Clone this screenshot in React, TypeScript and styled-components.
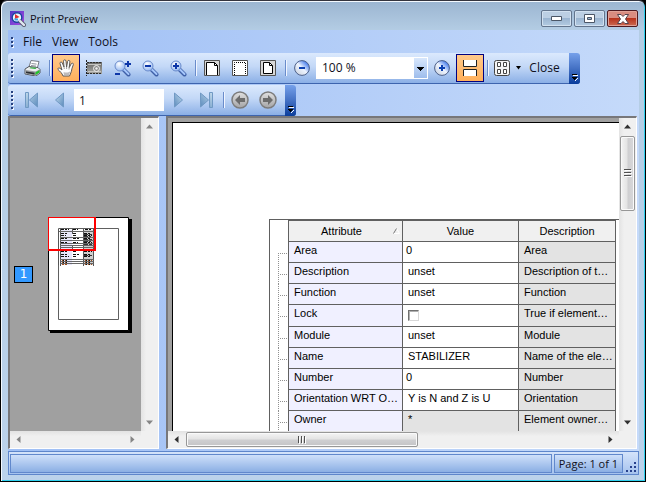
import React from 'react';
import styled, { createGlobalStyle, css } from 'styled-components';

const UI_FONT = '"Open Sans", "Noto Sans", sans-serif';
const TABLE_FONT = '"Liberation Sans", Arial, sans-serif';

const GlobalStyle = createGlobalStyle`
  * { box-sizing: border-box; }
  html, body { margin: 0; background: #000; }
  button, input, select { font: inherit; color: inherit; margin: 0; }
`;

/* ---------- window ---------- */

const Frame = styled.div`
  display: flex;
  flex-direction: column;
  height: 100vh;
  padding: 0 6px 6px;
  overflow: hidden;
  border: 1px solid #000;
  border-top-color: #34343e;
  border-radius: 7px 7px 0 0;
  box-shadow: inset 1px 1px 0 #f4f9ff, inset -1px -1px 0 #2fd0ee;
  background: linear-gradient(#9bb5d1 0, #b4cde4 30px, #bbd2eb 100%);
  font: 12px/16px ${UI_FONT};
  color: #10101c;
`;

const TitleBar = styled.header`
  display: flex;
  align-items: center;
  flex: none;
  height: 29px;
  padding: 6px 1px 0 3px;
  gap: 4px;
`;

const Title = styled.h1`
  flex: 1;
  margin: 0;
  font-size: 11px;
  font-weight: 400;
`;

const WindowButtons = styled.div`
  display: flex;
  gap: 2px;
`;

const WindowButton = styled.button<{ $danger?: boolean }>`
  display: flex;
  align-items: center;
  justify-content: center;
  width: 31px;
  height: 17px;
  padding: 0;
  border: 1px solid ${(p) => (p.$danger ? '#4e1a20' : '#63758d')};
  border-radius: 2px;
  box-shadow: inset 0 0 0 1px ${(p) => (p.$danger ? '#e0a297' : '#d2e1f0')};
  background: ${(p) =>
    p.$danger
      ? 'linear-gradient(#d98c80 0 45%, #b8331c 50%, #cb6b52)'
      : 'linear-gradient(#bccfe3 0 45%, #9bb5d1 50%, #b3cbe2)'};
`;

const Client = styled.div`
  display: flex;
  flex-direction: column;
  flex: 1;
  min-height: 0;
  margin-left: 1px;
  background: linear-gradient(90deg, #9fbff5, #c5dafa);
`;

/* ---------- menu and toolbars ---------- */

const Grip = styled.span<{ $rows: number }>`
  flex: none;
  width: 4px;
  height: ${(p) => p.$rows * 4}px;
  margin: 0 3px;
  background:
    repeating-linear-gradient(transparent 0 1px, #27417f 1px 3px, transparent 3px 4px) 0 0 / 2px 100% no-repeat,
    repeating-linear-gradient(transparent 0 2px, #f4f8ff 2px 4px) 1px 0 / 2px 100% no-repeat;
`;

const MenuBar = styled.nav`
  display: flex;
  align-items: center;
  flex: none;
  height: 23px;
`;

const MenuItem = styled.button`
  padding: 0 5px;
  border: 0;
  background: none;
`;

const Toolbars = styled.div`
  display: flex;
  flex-direction: column;
  flex: none;
  gap: 1px;
`;

const Toolbar = styled.div`
  display: flex;
  align-items: center;
  align-self: flex-start;
  flex: none;
  height: 31px;
  border-radius: 3px;
  border-bottom: 1px solid #3d64ae;
  background: linear-gradient(#dbe9fd, #c3d8f7 45%, #8bafe6);
`;

const ToolButton = styled.button<{ $active?: boolean; $width?: number }>`
  display: flex;
  align-items: center;
  justify-content: center;
  flex: none;
  width: ${(p) => p.$width ?? 28}px;
  height: 28px;
  padding: 0;
  border: 1px solid transparent;
  background: none;
  ${(p) =>
    p.$active &&
    css`
      border-color: #000080;
      background: linear-gradient(#ffc98b, #ffb05c);
    `}
`;

const Separator = styled.span`
  flex: none;
  width: 2px;
  height: 16px;
  margin: 0 1px 0 3px;
  background: linear-gradient(90deg, #6a8ccb 1px, #f1f6ff 1px);
`;

const Overflow = styled.button`
  display: flex;
  align-items: flex-end;
  justify-content: center;
  width: 11px;
  height: 31px;
  margin-left: 3px;
  margin-bottom: -1px;
  padding: 0 0 3px;
  border: 0;
  border-radius: 0 3px 3px 0;
  background: linear-gradient(#75a0ea, #4471c4 50%, #0a3d9c);
`;

const ZoomBox = styled.div`
  display: flex;
  width: 112px;
  height: 22px;
  background: #fff;
`;

const ZoomSelect = styled.select`
  appearance: none;
  flex: 1;
  padding: 0 0 0 6px;
  border: 0;
  border-radius: 0;
  background:
    linear-gradient(#000, #000) right 4px top 10px / 7px 1px no-repeat,
    linear-gradient(#000, #000) right 5px top 11px / 5px 1px no-repeat,
    linear-gradient(#000, #000) right 6px top 12px / 3px 1px no-repeat,
    linear-gradient(#000, #000) right 7px top 13px / 1px 1px no-repeat,
    linear-gradient(#d8e7fc, #9ebdec) right 1px center / 13px 20px no-repeat,
    #fff;
`;

const PageInput = styled.input`
  width: 90px;
  height: 22px;
  padding: 0 5px;
  border: 0;
  background: #fff;
`;

/* ---------- panes ---------- */

const Panes = styled.main`
  display: flex;
  flex: 1;
  min-height: 0;
  gap: 7px;
  padding: 0 2px 2px 0;
`;

const Pane = styled.section<{ $side?: boolean }>`
  display: grid;
  flex: ${(p) => (p.$side ? '0 0 151px' : '1')};
  grid-template: minmax(0, 1fr) 17px / minmax(0, 1fr) 17px;
  min-width: 0;
  border: solid;
  border-width: 2px 1px 1px 2px;
  border-color: #77777a #fff #fff #77777a;
  background: #f0f0f0;
`;

const ThumbArea = styled.div`
  display: flex;
  align-items: center;
  gap: 15px;
  padding-left: 4px;
  overflow: hidden;
  background: #a0a0a0;
`;

const PageBadge = styled.span`
  flex: none;
  width: 19px;
  height: 17px;
  border: 1px solid #000;
  background: #3399ff;
  color: #fff;
  font: 12px/15px "DejaVu Sans", sans-serif;
  text-align: center;
`;

const PageArea = styled.div`
  display: flex;
  padding: 4px 0 0 4px;
  overflow: hidden;
  background: #a0a0a0;
`;

const Sheet = styled.div`
  flex: 1 0 auto;
  width: 100%;
  padding: 96px 0 0 96px;
  border: solid #000;
  border-width: 1px 0 0 1px;
  background: #fff;
`;

const Bar = styled.div<{ $vertical?: boolean }>`
  display: flex;
  flex-direction: ${(p) => (p.$vertical ? 'column' : 'row')};
  min-width: 0;
  min-height: 0;
  background: ${(p) =>
    p.$vertical
      ? 'linear-gradient(90deg, #e3e3e3, #f0f0f0 30%, #f0f0f0)'
      : 'linear-gradient(#e3e3e3, #f0f0f0 30%, #f0f0f0)'};
`;

const BarArrow = styled.button<{ $muted?: boolean }>`
  display: flex;
  align-items: center;
  justify-content: center;
  flex: none;
  width: 17px;
  height: 17px;
  padding: 0;
  border: 0;
  background: none;
  color: ${(p) => (p.$muted ? '#858585' : '#303030')};
`;

const BarTrack = styled.div<{ $vertical?: boolean }>`
  display: flex;
  flex: 1;
  flex-direction: ${(p) => (p.$vertical ? 'column' : 'row')};
  min-width: 0;
  min-height: 0;
  padding: 1px;
`;

const BarThumb = styled.button<{ $vertical?: boolean }>`
  display: flex;
  align-items: center;
  justify-content: center;
  padding: 0;
  border: 1px solid #979797;
  border-radius: 2px;
  box-shadow: inset 0 0 0 1px #fafafa;
  ${(p) =>
    p.$vertical
      ? css`
          height: 27%;
          background: linear-gradient(90deg, #f4f4f4, #e4e4e4 45%, #cfcfd1 55%, #d8d8da);
        `
      : css`
          width: 56%;
          background: linear-gradient(#f4f4f4, #e4e4e4 45%, #cfcfd1 55%, #c4c4c6);
        `}
`;

/* ---------- attribute table ---------- */

const TableFrame = styled.div`
  height: 100%;
  border: solid #606060;
  border-width: 1px 0 0 1px;
  font: 11px/17px ${TABLE_FONT};
  color: #000;
`;

const Table = styled.table`
  width: 346px;
  table-layout: fixed;
  border-collapse: separate;
  border-spacing: 0;
`;

const Col = styled.col<{ $w: number }>`
  width: ${(p) => p.$w}px;
`;

const HeadCell = styled.th`
  height: 22px;
  padding: 0;
  border: solid #606060;
  border-width: 1px 1px 1px 0;
  background: #f0f0f0;
  font-weight: 400;
`;

const HeadLabel = styled.span`
  display: flex;
  align-items: center;
  justify-content: center;
  gap: 31px;
  padding-left: 30px;
`;

const Corner = styled.td`
  padding: 0;
  border-right: 1px solid #606060;
`;

const Gutter = styled.td<{ $first?: boolean }>`
  padding: 0;
  border-right: 1px solid #606060;
  background:
    repeating-linear-gradient(90deg, #909090 0 1px, transparent 1px 2px) 10px 11px / 8px 1px no-repeat,
    repeating-linear-gradient(#909090 0 1px, transparent 1px 2px) 8px ${(p) => (p.$first ? 11 : 0)}px / 1px 100%
      no-repeat;
`;

const fills = { name: '#f0f0ff', value: '#fff', locked: '#e3e3e3' };

const Cell = styled.td<{ $fill: keyof typeof fills; $tight?: boolean; $tall?: boolean }>`
  height: ${(p) => (p.$tall ? 22 : 21)}px;
  padding: 0 0 0 ${(p) => (p.$tight ? 3 : 5)}px;
  border: solid #606060;
  border-width: 0 1px 1px 0;
  background: ${(p) => fills[p.$fill]};
  vertical-align: top;
  white-space: nowrap;
  overflow: hidden;
`;

const LockBox = styled.input`
  appearance: none;
  display: block;
  width: 11px;
  height: 11px;
  margin: 5px 0 0;
  border: 1px solid;
  border-color: #707070 #d8d8d8 #d8d8d8 #707070;
  box-shadow: inset 1px 1px 0 #b0b0b0;
  background: #fff;
`;

/* ---------- status bar ---------- */

const StatusBar = styled.footer`
  display: flex;
  flex: none;
  gap: 2px;
  height: 24px;
  padding: 2px 1px 1px;
  border: 1px solid #5e86cb;
  background: linear-gradient(#d4e3fa, #a5c2ee);
  font-size: 11px;
`;

const StatusCell = styled.div<{ $grow?: boolean }>`
  flex: ${(p) => (p.$grow ? '1' : 'none')};
  padding: 0 4px;
  border: 1px solid #6188cc;
  background: linear-gradient(#cfe0fa, #8bafe4);
  line-height: 17px;
`;

const SizeGrip = styled.div`
  display: flex;
  align-items: flex-end;
  width: 12px;
`;

/* ---------- drawings ---------- */

const Svg = ({ w = 16, h = 16, children }: { w?: number; h?: number; children: React.ReactNode }) => (
  <svg width={w} height={h} viewBox={`0 0 ${w} ${h}`} aria-hidden="true">
    {children}
  </svg>
);

const Defs = styled.svg`
  position: absolute;
`;

const Gradients = () => (
  <Defs width="0" height="0" aria-hidden="true">
    <defs>
      <radialGradient id="lens" cx="0.4" cy="0.3" r="0.75">
        <stop offset="0" stopColor="#fff" />
        <stop offset="1" stopColor="#8fb4f0" />
      </radialGradient>
      <linearGradient id="ball" x1="1" y1="0" x2="0" y2="1">
        <stop offset="0" stopColor="#1a56e4" />
        <stop offset="0.2" stopColor="#5b8cf0" />
        <stop offset="0.5" stopColor="#eef4fe" />
        <stop offset="1" stopColor="#c4ccda" />
      </linearGradient>
      <linearGradient id="nav" x1="0" y1="0" x2="1" y2="1">
        <stop offset="0" stopColor="#c4dced" />
        <stop offset="1" stopColor="#5a8abc" />
      </linearGradient>
      <linearGradient id="disc" x1="0" y1="0" x2="0" y2="1">
        <stop offset="0" stopColor="#e0e0e0" />
        <stop offset="1" stopColor="#a4a4a6" />
      </linearGradient>
      <linearGradient id="app" x1="0" y1="0" x2="1" y2="1">
        <stop offset="0" stopColor="#5038c8" />
        <stop offset="1" stopColor="#a84be0" />
      </linearGradient>
      <linearGradient id="film" x1="0" y1="0" x2="0" y2="1">
        <stop offset="0" stopColor="#686866" />
        <stop offset="1" stopColor="#a6a6a2" />
      </linearGradient>
    </defs>
  </Defs>
);

const AppIcon = () => (
  <Svg>
    <path d="M0 0h14v14H0z" fill="url(#app)" />
    <circle cx="7" cy="6.500" r="4.800" fill="#eef8ff" stroke="#1a44a0" strokeWidth="1.400" />
    <path d="M5 3l4.500 3L5 8z" fill="#e03030" />
    <path d="M4 7.500h4v2H5z" fill="#37a8e8" />
    <path d="M10.500 10.500l3.500 3.500" stroke="#555c70" strokeWidth="4" strokeLinecap="round" />
    <path d="M10 10l4 4" stroke="#e3e9f2" strokeWidth="2.400" strokeLinecap="round" />
  </Svg>
);

const PrinterIcon = () => (
  <Svg w={17}>
    <path d="M4.500 8.500l2.500-8 8 1-2 8z" fill="#fff" stroke="#777c84" />
    <path d="M7.500 3.500l5 .6M7 5.500l5 .6" stroke="#8f949c" />
    <path d="M1 9l4-2.500 9 1 2 2v3.500L12 16 1 14z" fill="#eceeef" stroke="#54585e" />
    <path d="M1.500 10l10 1.500 4-2v3l-4 3-10-2z" fill="#96999c" />
    <path d="M2 11.500l8.500 1.300v1.700L2 13z" fill="#2c2f33" />
    <path d="M11.500 12.500l4-2.500v2.500l-4 2.500z" fill="#20c828" />
    <path d="M5.500 8.300l6 .8 1-1.300-6-.6z" fill="#2fae3c" />
  </Svg>
);

const HandIcon = () => (
  <Svg w={18} h={18}>
    <path
      d="M6 17C5 14 3 12.500 1 10.500.300 9.300 1.800 8.500 3 9.300L5 11 3 4.500c-.2-1.700 1.900-2.100 2.300-.5L7 8 6.500 2.200c0-1.800 2.300-1.900 2.500-.1L9.600 8l1-5.600c.3-1.600 2.500-1.300 2.300.4L12.200 8.600l2-3.800c.8-1.400 2.600-.5 2.100.9-.9 2.300-1.700 4.500-2 7L12.500 17z"
      fill="#fdfdfd"
      stroke="#5f5a58"
    />
    <path d="M7 16h5l1.500-4c-2 1.700-4.500 2-7 1z" fill="#bdbaba" />
    <path d="M7 8l.3 2M9.600 8v2M12.200 8.600L12 10.500" stroke="#8b8684" strokeWidth=".8" />
  </Svg>
);

const FilmIcon = () => (
  <Svg w={17}>
    <path d="M1 2h15v12H1z" fill="url(#film)" />
    <path d="M.5 0v16" stroke="#222" strokeDasharray="2 1" />
    <path d="M1 2.500h15M1 13.500h15" stroke="#2e2e2c" strokeDasharray="2 1" />
    <path d="M2 4.500h13M2 11.500h13" stroke="#c4c4c0" />
    <circle cx="10.500" cy="8.500" r="3" fill="#8b8b89" stroke="#f0f0f0" />
    <circle cx="10.500" cy="8.500" r="1.200" fill="#f0f0f0" />
  </Svg>
);

const LensIcon = ({ sign }: { sign: 'both' | 'minus' | 'plus' }) => (
  <Svg w={17} h={17}>
    <path d="M9.500 9.500l5 5" stroke="#3f60a8" strokeWidth="4" strokeLinecap="round" />
    <path d="M10 9.500l4.500 4.500" stroke="#a5c6fb" strokeWidth="2" strokeLinecap="round" />
    <circle cx="6" cy="6" r="5" fill="url(#lens)" stroke="#6b8ccc" />
    {sign !== 'both' && <path d="M3 5h6v2H3z" fill="#0d36a8" />}
    {sign === 'plus' && <path d="M5 3h2v6H5z" fill="#0d36a8" />}
    {sign === 'both' && <path d="M11 3h6v2h-6zM13 1h2v6h-2zM1 13h5v2H1z" fill="#0d36a8" />}
  </Svg>
);

const PageFrame = ({ children }: { children: React.ReactNode }) => (
  <Svg>
    <path d="M.5.5h15v15H.5z" fill="#d8d8d8" stroke="#555" />
    {children}
  </Svg>
);

const ZoomBall = ({ plus }: { plus?: boolean }) => (
  <Svg>
    <circle cx="8" cy="8" r="7.400" fill="url(#ball)" stroke="#4c5f88" />
    <path d="M5 7h6v2H5z" fill="#0c40b0" />
    {plus && <path d="M7 5h2v6H7z" fill="#0c40b0" />}
  </Svg>
);

const ContinuousIcon = () => (
  <Svg>
    <path d="M1 0h14v7H1zM1 9h14v7H1z" fill="#fff" />
    <path d="M1.500 0v6.500h13V0M1.500 16V9.500h13V16" fill="none" stroke="#222" />
  </Svg>
);

const GridIcon = () => (
  <Svg>
    <rect x=".5" y=".5" width="15" height="15" rx="2" fill="#f4f4f4" stroke="#444" />
    <path d="M3.500 2.500h3v4h-3zM9.500 2.500h3v4h-3zM3.500 9.500h3v4h-3zM9.500 9.500h3v4h-3z" fill="#fff" stroke="#444" />
  </Svg>
);

const NavIcon = ({ edge, flip }: { edge?: boolean; flip?: boolean }) => (
  <Svg w={14}>
    <g transform={flip ? 'translate(14 0) scale(-1 1)' : undefined}>
      {edge ? (
        <path d="M.5.5h3v15h-3zM12.500 1v14L4.500 8z" fill="url(#nav)" stroke="#7099c4" />
      ) : (
        <path d="M10.500 1v14L2.500 8z" fill="url(#nav)" stroke="#7099c4" />
      )}
    </g>
  </Svg>
);

const DiscIcon = ({ flip }: { flip?: boolean }) => (
  <Svg w={18} h={18}>
    <g transform={flip ? 'translate(18 0) scale(-1 1)' : undefined}>
      <circle cx="9" cy="9" r="8" fill="url(#disc)" stroke="#7c7c7c" strokeWidth="1.500" />
      <path d="M4 9l5-5v3h5v4H9v3z" fill="#6c6c6c" />
    </g>
  </Svg>
);

const DropIcon = () => (
  <Svg w={7} h={4}>
    <path d="M1 0h5L3.500 3.500z" fill="#000" />
  </Svg>
);

const ChevronIcon = () => (
  <Svg w={7} h={8}>
    <path d="M1 1h5v1H1zM1 4h5v1H5v1H4v1H3V6H2V5H1z" fill="#000" />
    <path d="M2 2h5v1H2zM5 6h1V5h1v1H6v1H5v1H4V7h1z" fill="#fff" />
  </Svg>
);

const turns = { up: 0, right: 90, down: 180, left: 270 };

const ScrollArrow = ({ dir }: { dir: keyof typeof turns }) => (
  <Svg w={9} h={9}>
    <path d="M4.500 2.500l3.500 4H1z" fill="currentColor" transform={`rotate(${turns[dir]} 4.5 4.5)`} />
  </Svg>
);

const ThumbRidges = ({ vertical }: { vertical?: boolean }) => (
  <Svg w={8} h={8}>
    <path d={vertical ? 'M1 1h7v1H1zM1 4h7v1H1zM1 7h7v1H1z' : 'M1 1h1v7H1zM4 1h1v7H4zM7 1h1v7H7z'} fill="#fff" />
    <path d={vertical ? 'M0 .5h7M0 3.500h7M0 6.500h7' : 'M.5 0v7M3.500 0v7M6.500 0v7'} stroke="#505050" />
  </Svg>
);

const ThumbPage = () => (
  <Svg w={84} h={116}>
    <path d="M2 2h82v114H2z" fill="#000" />
    <path d="M.5.5h80v113H.5z" fill="#fff" stroke="#000" />
    <path d="M10.500 11.500h60v91h-60z" fill="none" stroke="#606060" />
    <path d="M12 13h12v35H12z" fill="#e6e6fa" />
    <path d="M35 13h11v35H35z" fill="#cfcfcf" />
    <path d="M12.500 12v37M24.500 12v5M24.500 29v3M35.500 12v37M45.500 12v37M10.500 12v36" stroke="#555" />
    <path
      d="M11 14.500h35M12 20.500h34M12 23.500h34M12 26.500h34M12 28.500h34M12 30.500h34M12 42.500h34M12 44.500h34M12 46.500h34"
      stroke="#666"
    />
    <path
      d="M13 12.500h8M25 12.500h5M37 12.500h6M13 16.500h7M25 16.500h4M36 16.500h6M13 18.500h5M25 18.500h3M36 18.500h8M13 21.500h7M25 21.500h6M36 21.500h7M13 25.500h6M25 25.500h5M36 25.500h8M13 34.500h7M25 34.500h4M36 34.500h8M13 37.500h6M25 37.500h7M36 37.500h7M13 39.500h8M25 39.500h4M36 39.500h6"
      stroke="#111"
      strokeDasharray="3 1 2 1"
    />
    <path d="M36 17.500h8M36 19.500h7M36 22.500h8M36 24.500h7M36 27.500h8M36 38.500h8" stroke="#333" strokeDasharray="4 1" />
    <path d="M14 43.500h6M14 45.500h5M14 47.500h6M37 43.500h7M37 45.500h6M37 47.500h7" stroke="#a4501c" strokeDasharray="2 1" />
    <path d="M15 43.500h5M15 45.500h5M38 43.500h5M38 45.500h5M38 47.500h5" stroke="#111" strokeDasharray="1 2" />
    <path d="M0 .5h47M.5 0v33" stroke="#f00" />
    <path d="M0 33h48M47 0v34" stroke="#f00" strokeWidth="2" />
  </Svg>
);

/* ---------- composition ---------- */

const VScroll = ({ muted }: { muted?: boolean }) => (
  <Bar $vertical>
    <BarArrow $muted={muted} aria-label="Scroll up"><ScrollArrow dir="up" /></BarArrow>
    <BarTrack $vertical>
      {!muted && <BarThumb $vertical aria-label="Vertical position"><ThumbRidges vertical /></BarThumb>}
    </BarTrack>
    <BarArrow $muted={muted} aria-label="Scroll down"><ScrollArrow dir="down" /></BarArrow>
  </Bar>
);

const HScroll = ({ muted }: { muted?: boolean }) => (
  <Bar>
    <BarArrow $muted={muted} aria-label="Scroll left"><ScrollArrow dir="left" /></BarArrow>
    <BarTrack>
      {!muted && <BarThumb aria-label="Horizontal position"><ThumbRidges /></BarThumb>}
    </BarTrack>
    <BarArrow $muted={muted} aria-label="Scroll right"><ScrollArrow dir="right" /></BarArrow>
  </Bar>
);

type Row = { name: string; value: string | boolean; about: string; locked?: boolean };

const rows: Row[] = [
  { name: 'Area', value: '0', about: 'Area' },
  { name: 'Description', value: 'unset', about: 'Description of t…' },
  { name: 'Function', value: 'unset', about: 'Function' },
  { name: 'Lock', value: false, about: 'True if element…' },
  { name: 'Module', value: 'unset', about: 'Module' },
  { name: 'Name', value: 'STABILIZER', about: 'Name of the ele…' },
  { name: 'Number', value: '0', about: 'Number' },
  { name: 'Orientation WRT O…', value: 'Y is N and Z is U', about: 'Orientation' },
  { name: 'Owner', value: '*', about: 'Element owner…', locked: true },
];

const AttributeTable = () => (
  <Table>
    <colgroup>
      <Col $w={19} />
      <Col $w={114} />
      <Col $w={116} />
      <Col $w={97} />
    </colgroup>
    <thead>
      <tr>
        <Corner />
        <HeadCell>
          <HeadLabel>
            Attribute
            <Svg w={7} h={6}>
              <path d="M3.500.5l3 5h-6" stroke="#fff" fill="none" />
              <path d="M.5 5.500L3.500.5" stroke="#777" />
            </Svg>
          </HeadLabel>
        </HeadCell>
        <HeadCell>Value</HeadCell>
        <HeadCell>Description</HeadCell>
      </tr>
    </thead>
    <tbody>
      {rows.map((row, i) => {
        const tall = typeof row.value === 'boolean';
        return (
          <tr key={row.name}>
            <Gutter $first={i === 0} />
            <Cell $fill="name" $tall={tall}>{row.name}</Cell>
            <Cell $fill={row.locked ? 'locked' : 'value'} $tight={row.value === '0'} $tall={tall}>
              {typeof row.value === 'boolean' ? (
                <LockBox type="checkbox" aria-label={row.name} defaultChecked={row.value} />
              ) : (
                row.value
              )}
            </Cell>
            <Cell $fill="locked" $tall={tall}>{row.about}</Cell>
          </tr>
        );
      })}
    </tbody>
  </Table>
);

const PreviewToolbar = () => (
  <Toolbar role="toolbar" aria-label="Preview">
    <Grip $rows={5} />
    <ToolButton aria-label="Print"><PrinterIcon /></ToolButton>
    <Separator />
    <ToolButton $active aria-label="Hand tool"><HandIcon /></ToolButton>
    <ToolButton aria-label="Zoom region"><FilmIcon /></ToolButton>
    <ToolButton aria-label="Dynamic zoom"><LensIcon sign="both" /></ToolButton>
    <ToolButton aria-label="Zoom out tool"><LensIcon sign="minus" /></ToolButton>
    <ToolButton aria-label="Zoom in tool"><LensIcon sign="plus" /></ToolButton>
    <Separator />
    <ToolButton aria-label="Page width">
      <PageFrame>
        <path d="M2.500 15V2.500h8l3 3V15" fill="#fff" stroke="#000" />
        <path d="M10.500 2.500v3h3" fill="none" stroke="#000" />
      </PageFrame>
    </ToolButton>
    <ToolButton aria-label="Margin width">
      <PageFrame>
        <path d="M1 1h14v14H1z" fill="#fff" />
        <path d="M2.500 15V2.500h11V15" fill="none" stroke="#000" strokeDasharray="1 1" />
      </PageFrame>
    </ToolButton>
    <ToolButton aria-label="Whole page">
      <PageFrame>
        <path d="M3.500 2.500h6l3 3v8h-9z" fill="#fff" stroke="#000" />
        <path d="M9.500 2.500v3h3" fill="none" stroke="#000" />
      </PageFrame>
    </ToolButton>
    <Separator />
    <ToolButton aria-label="Zoom out"><ZoomBall /></ToolButton>
    <ZoomBox>
      <ZoomSelect aria-label="Zoom" defaultValue="100 %">
        <option>100 %</option>
      </ZoomSelect>
    </ZoomBox>
    <ToolButton aria-label="Zoom in"><ZoomBall plus /></ToolButton>
    <ToolButton $active aria-label="Continuous"><ContinuousIcon /></ToolButton>
    <Separator />
    <ToolButton $width={24} aria-label="Page layout"><GridIcon /></ToolButton>
    <ToolButton $width={9} aria-label="Page layout options"><DropIcon /></ToolButton>
    <ToolButton $width={43}>Close</ToolButton>
    <Overflow aria-label="Toolbar options"><ChevronIcon /></Overflow>
  </Toolbar>
);

const PageToolbar = () => (
  <Toolbar role="toolbar" aria-label="Pages">
    <Grip $rows={5} />
    <ToolButton aria-label="First page"><NavIcon edge /></ToolButton>
    <ToolButton aria-label="Previous page"><NavIcon /></ToolButton>
    <PageInput aria-label="Page number" defaultValue="1" />
    <ToolButton aria-label="Next page"><NavIcon flip /></ToolButton>
    <ToolButton aria-label="Last page"><NavIcon edge flip /></ToolButton>
    <Separator />
    <ToolButton aria-label="Back"><DiscIcon /></ToolButton>
    <ToolButton aria-label="Forward"><DiscIcon flip /></ToolButton>
    <Overflow aria-label="Toolbar options"><ChevronIcon /></Overflow>
  </Toolbar>
);

export default function App() {
  return (
    <>
      <GlobalStyle />
      <Gradients />
      <Frame>
        <TitleBar>
          <AppIcon />
          <Title>Print Preview</Title>
          <WindowButtons>
            <WindowButton aria-label="Minimize">
              <Svg w={11} h={5}><path d="M.5.5h10v4H.5z" fill="#fff" stroke="#4b5666" /></Svg>
            </WindowButton>
            <WindowButton aria-label="Maximize">
              <Svg w={11} h={9}>
                <path d="M.5.5h10v8H.5zM3.500 3.500v2h4v-2z" fill="#fff" fillRule="evenodd" stroke="#4b5666" />
              </Svg>
            </WindowButton>
            <WindowButton $danger aria-label="Close window">
              <Svg w={12} h={10}>
                <path d="M.5.5h3.500l2 2 2-2h3.500L8.500 5l3 4.500H8l-2-2-2 2H.5l3-4.500z" fill="#fff" stroke="#53424c" />
              </Svg>
            </WindowButton>
          </WindowButtons>
        </TitleBar>
        <Client>
          <MenuBar>
            <Grip $rows={3} />
            <MenuItem>File</MenuItem>
            <MenuItem>View</MenuItem>
            <MenuItem>Tools</MenuItem>
          </MenuBar>
          <Toolbars>
            <PreviewToolbar />
            <PageToolbar />
          </Toolbars>
          <Panes>
            <Pane $side aria-label="Page thumbnails">
              <ThumbArea>
                <PageBadge>1</PageBadge>
                <ThumbPage />
              </ThumbArea>
              <VScroll muted />
              <HScroll muted />
            </Pane>
            <Pane aria-label="Page">
              <PageArea>
                <Sheet>
                  <TableFrame>
                    <AttributeTable />
                  </TableFrame>
                </Sheet>
              </PageArea>
              <VScroll />
              <HScroll />
            </Pane>
          </Panes>
          <StatusBar>
            <StatusCell $grow />
            <StatusCell>Page: 1 of 1</StatusCell>
            <SizeGrip>
              <Svg w={12} h={12}>
                <path d="M9 1h2v2H9zM5 5h2v2H5zM9 5h2v2H9zM1 9h2v2H1zM5 9h2v2H5zM9 9h2v2H9z" fill="#27418c" />
              </Svg>
            </SizeGrip>
          </StatusBar>
        </Client>
      </Frame>
    </>
  );
}
